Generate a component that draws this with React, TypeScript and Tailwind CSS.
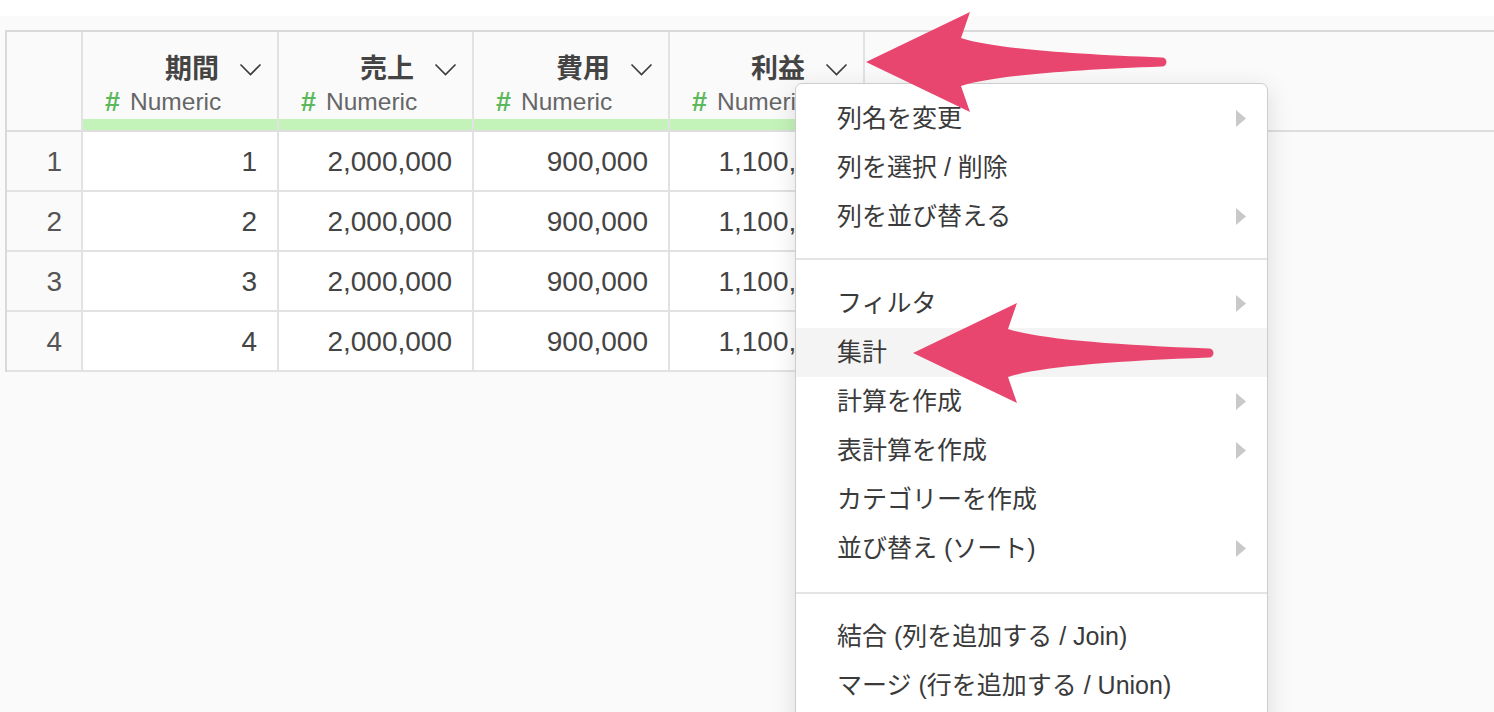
import React from 'react';

const FONT = { fontFamily: '"Liberation Sans", "Noto Sans CJK JP", sans-serif' };

const COLUMNS = [
  { name: '期間', width: 'w-[196px]' },
  { name: '売上', width: 'w-[195px]' },
  { name: '費用', width: 'w-[196px]' },
  { name: '利益', width: 'w-[195px]' },
];

const ROWS = [
  ['1', '2,000,000', '900,000', '1,100,000'],
  ['2', '2,000,000', '900,000', '1,100,000'],
  ['3', '2,000,000', '900,000', '1,100,000'],
  ['4', '2,000,000', '900,000', '1,100,000'],
];

type MenuItem = { label: string; sub?: boolean; active?: boolean };

const MENU_GROUPS: MenuItem[][] = [
  [
    { label: '列名を変更', sub: true },
    { label: '列を選択 / 削除' },
    { label: '列を並び替える', sub: true },
  ],
  [
    { label: 'フィルタ', sub: true },
    { label: '集計', active: true },
    { label: '計算を作成', sub: true },
    { label: '表計算を作成', sub: true },
    { label: 'カテゴリーを作成' },
    { label: '並び替え (ソート)', sub: true },
  ],
  [
    { label: '結合 (列を追加する / Join)' },
    { label: 'マージ (行を追加する / Union)' },
  ],
];

function Chevron() {
  return (
    <svg width="23" height="13" viewBox="0 0 23 13" className="shrink-0">
      <polyline points="1.5,1.5 11.5,11.5 21.5,1.5" fill="none" stroke="#3a3a3a" strokeWidth="1.6" />
    </svg>
  );
}

// pink callout arrow, tip at the left edge, vertically centred
function Arrow({ className }: { className: string }) {
  return (
    <svg width="302" height="104" viewBox="0 -52 302 104" className={className}>
      <path
        d="M0 0 L104 -50 L95 -24 C125 -14 200 -8 296 -4.5 A4.5 4.5 0 0 1 296 4.5 C200 8 125 14 95 24 L104 50 Z"
        fill="#e9466f"
      />
    </svg>
  );
}

function HeaderCell({ name, width }: { name: string; width: string }) {
  return (
    <div className={`${width} h-[98px] flex flex-col border-r-2 border-[#e2e2e2] bg-[#fafafa]`}>
      <div className="mt-[19px] h-[36px] flex items-center justify-end gap-[20px] pr-[15px]">
        <span className="text-[27px] font-bold text-[#444]">{name}</span>
        <Chevron />
      </div>
      <div className="mt-[1px] h-[28px] flex items-center gap-[10px] pl-[22px] text-[24.5px]">
        <span className="text-[27px] font-bold text-[#5cb85c]">#</span>
        <span className="text-[#666]">Numeric</span>
      </div>
      <div className="mt-auto h-[11px] bg-[#c4f3b9]" />
    </div>
  );
}

export default function App() {
  return (
    <div className="relative h-[712px] w-[1494px] overflow-hidden bg-white" style={FONT}>
      <div className="h-4 bg-white" />
      <div className="h-[696px] bg-[#fafafa] pt-[14px] pl-[5px]">
        <div className="border-t-2 border-l-2 border-[#d9d9d9]">
          {/* header */}
          <div className="flex border-b-2 border-[#dedede]">
            <div className="w-[76px] h-[98px] border-r-2 border-[#e2e2e2] bg-[#fafafa]" />
            {COLUMNS.map((c) => (
              <HeaderCell key={c.name} name={c.name} width={c.width} />
            ))}
            <div className="flex-1 bg-[#fafafa]" />
          </div>

          {/* rows */}
          <div className="w-fit">
            {ROWS.map((row, i) => (
              <div key={i} className="flex h-[60px] border-b-2 border-[#e2e2e2]">
                <div className="w-[76px] flex items-center justify-end pt-[2px] pr-[19px] border-r-2 border-[#e2e2e2] bg-[#fafafa] text-[28px] text-[#555]">
                  {i + 1}
                </div>
                {row.map((v, j) => (
                  <div
                    key={j}
                    className={`${COLUMNS[j].width} flex items-center justify-end pt-[2px] pr-[20px] border-r-2 border-[#e2e2e2] bg-white text-[28px] text-[#444]`}
                  >
                    {v}
                  </div>
                ))}
              </div>
            ))}
          </div>
        </div>
      </div>

      {/* context menu */}
      <div className="absolute left-[795px] top-[83px] w-[473px] h-[660px] bg-white border-[1.5px] border-[#cdcdcd] rounded-[7px] pt-[10px] shadow-[0_6px_24px_rgba(0,0,0,0.13)]">
        {MENU_GROUPS.map((group, gi) => (
          <div key={gi}>
            {gi > 0 && (
              <div className={`h-[2px] bg-[#e4e4e4] ${gi === 1 ? 'mt-[17px] mb-[19px]' : 'mt-[19px] mb-[18px]'}`} />
            )}
            {group.map((item) => (
              <div
                key={item.label}
                className={`h-[49px] flex items-center justify-between pl-[41px] pr-[21px] text-[25px] text-[#3a3a3a] ${item.active ? 'bg-[#f4f4f4]' : ''}`}
              >
                <span>{item.label}</span>
                {item.sub && (
                  <svg width="10" height="17" viewBox="0 0 10 17">
                    <polygon points="0,0 10,8.5 0,17" fill="#c9c9c9" />
                  </svg>
                )}
              </div>
            ))}
          </div>
        ))}
      </div>

      <Arrow className="absolute left-[866px] top-[10px]" />
      <Arrow className="absolute left-[913px] top-[301px]" />
    </div>
  );
}
